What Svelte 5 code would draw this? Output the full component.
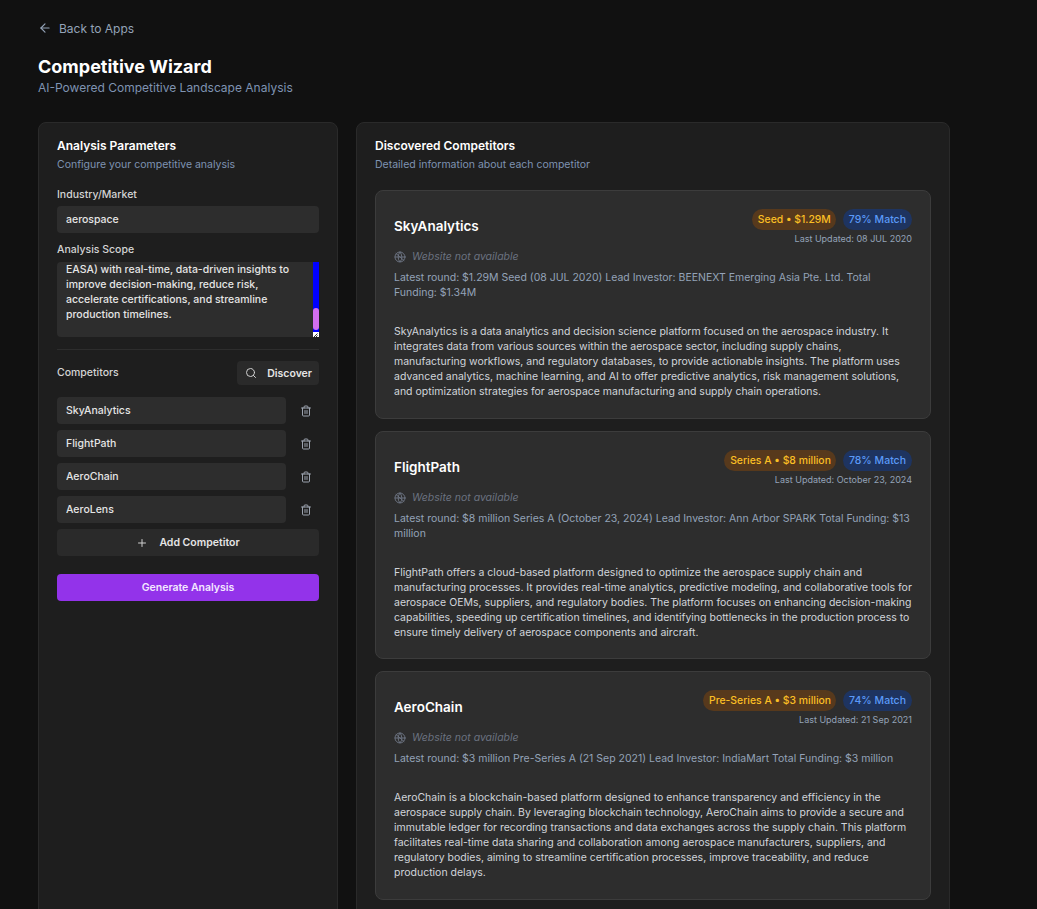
<script>
import { onMount } from 'svelte';
let ta = $state();
const scope = "Map the competitive landscape for platforms serving aerospace manufacturers, suppliers and regulators worldwide (FAA,\nEASA) with real-time, data-driven insights to improve decision-making, reduce risk, accelerate certifications, and streamline production timelines.";
onMount(() => { if (ta) ta.scrollTop = ta.scrollHeight; });
const names = ['SkyAnalytics','FlightPath','AeroChain','AeroLens'];
const cards = [
 {name:'SkyAnalytics',round:'Seed • $1.29M',match:'79% Match',updated:'Last Updated: 08 JUL 2020',
  latest:'Latest round: $1.29M Seed (08 JUL 2020) Lead Investor: BEENEXT Emerging Asia Pte. Ltd. Total Funding: $1.34M',
  desc:'SkyAnalytics is a data analytics and decision science platform focused on the aerospace industry. It integrates data from various sources within the aerospace sector, including supply chains, manufacturing workflows, and regulatory databases, to provide actionable insights. The platform uses advanced analytics, machine learning, and AI to offer predictive analytics, risk management solutions, and optimization strategies for aerospace manufacturing and supply chain operations.'},
 {name:'FlightPath',round:'Series A • $8 million',match:'78% Match',updated:'Last Updated: October 23, 2024',
  latest:'Latest round: $8 million Series A (October 23, 2024) Lead Investor: Ann Arbor SPARK Total Funding: $13 million',
  desc:'FlightPath offers a cloud-based platform designed to optimize the aerospace supply chain and manufacturing processes. It provides real-time analytics, predictive modeling, and collaborative tools for aerospace OEMs, suppliers, and regulatory bodies. The platform focuses on enhancing decision-making capabilities, speeding up certification timelines, and identifying bottlenecks in the production process to ensure timely delivery of aerospace components and aircraft.'},
 {name:'AeroChain',round:'Pre-Series A • $3 million',match:'74% Match',updated:'Last Updated: 21 Sep 2021',
  latest:'Latest round: $3 million Pre-Series A (21 Sep 2021) Lead Investor: IndiaMart Total Funding: $3 million',
  desc:'AeroChain is a blockchain-based platform designed to enhance transparency and efficiency in the aerospace supply chain. By leveraging blockchain technology, AeroChain aims to provide a secure and immutable ledger for recording transactions and data exchanges across the supply chain. This platform facilitates real-time data sharing and collaboration among aerospace manufacturers, suppliers, and regulatory bodies, aiming to streamline certification processes, improve traceability, and reduce production delays.'}
];
</script>

<div class="page">
  <a class="back" href="#top">
    <svg width="14" height="14" viewBox="0 0 24 24" fill="none" stroke="currentColor" stroke-width="2" stroke-linecap="round" stroke-linejoin="round"><path d="M19 12H5"/><path d="m12 19-7-7 7-7"/></svg>
    <span>Back to Apps</span>
  </a>
  <h1>Competitive Wizard</h1>
  <p class="sub">AI-Powered Competitive Landscape Analysis</p>

  <div class="grid">
    <section class="panel left">
      <h2>Analysis Parameters</h2>
      <p class="hint">Configure your competitive analysis</p>
      <div class="label first">Industry/Market</div>
      <input class="field" value="aerospace" />
      <div class="label second">Analysis Scope</div>
      <div class="scope-wrap">
        <textarea class="scope" bind:this={ta} value={scope}></textarea>
        <div class="track"><div class="thumb"></div></div>
        <div class="resizer">
          <svg width="5" height="5" viewBox="0 0 5 5" fill="none" stroke="#333" stroke-width="1"><path d="M0.5 4.5 4.5 0.5"/><path d="M2.5 4.5 4.5 2.5"/></svg>
        </div>
      </div>
      <hr />
      <div class="comp-head">
        <span class="comp-title">Competitors</span>
        <button class="discover">
          <svg width="12" height="12" viewBox="0 0 24 24" fill="none" stroke="currentColor" stroke-width="2" stroke-linecap="round" stroke-linejoin="round"><circle cx="11" cy="11" r="8"/><path d="m21 21-4.3-4.3"/></svg>
          <span>Discover</span>
        </button>
      </div>
      <div class="rows">
        {#each names as n}
          <div class="row">
            <input class="field name" value={n} />
            <span class="trash">
              <svg width="12" height="12" viewBox="0 0 24 24" fill="none" stroke="currentColor" stroke-width="2" stroke-linecap="round" stroke-linejoin="round"><path d="M3 6h18"/><path d="M19 6v14a2 2 0 0 1-2 2H7a2 2 0 0 1-2-2V6"/><path d="M8 6V4a2 2 0 0 1 2-2h4a2 2 0 0 1 2 2v2"/><path d="M10 11v6"/><path d="M14 11v6"/></svg>
            </span>
          </div>
        {/each}
        <button class="add">
          <svg width="12" height="12" viewBox="0 0 24 24" fill="none" stroke="currentColor" stroke-width="2" stroke-linecap="round"><path d="M5 12h14"/><path d="M12 5v14"/></svg>
          <span>Add Competitor</span>
        </button>
      </div>
      <button class="generate">Generate Analysis</button>
    </section>

    <section class="panel right">
      <h2>Discovered Competitors</h2>
      <p class="hint">Detailed information about each competitor</p>
      <div class="cards">
        {#each cards as c}
          <article class="card">
            <div class="top">
              <h3>{c.name}</h3>
              <div class="meta">
                <div class="badges">
                  <span class="badge amber">{c.round}</span>
                  <span class="badge blue">{c.match}</span>
                </div>
                <div class="updated">{c.updated}</div>
              </div>
            </div>
            <div class="site">
              <svg width="12" height="12" viewBox="0 0 24 24" fill="none" stroke="currentColor" stroke-width="2" stroke-linecap="round" stroke-linejoin="round"><circle cx="12" cy="12" r="10"/><path d="M2 12h20"/><path d="M12 2a15 15 0 0 1 0 20 15 15 0 0 1 0-20"/><path d="m4 5 16 14"/></svg>
              <em>Website not available</em>
            </div>
            <p class="latest">{c.latest}</p>
            <p class="desc">{c.desc}</p>
          </article>
        {/each}
      </div>
    </section>
  </div>
</div>

<style>
:global(html), :global(body) { margin: 0; background: #111111; }
:global(body) { overflow: hidden; }
.page { height: 909px; overflow: hidden; box-sizing: border-box; padding: 20px 87px 0 38px; font-family: Inter, "Liberation Sans", sans-serif; color: #fff; background: #111111; }
.back { display: flex; align-items: center; gap: 7px; height: 16px; color: #94a3b8; font-size: 12px; text-decoration: none; }
h1 { margin: 20px 0 0; font-size: 18px; line-height: 22px; font-weight: 700; color: #fff; }
.sub { margin: 2px 0 0; font-size: 12px; line-height: 16px; color: #7f93b2; }
.grid { display: grid; grid-template-columns: 300px 594px; gap: 18px; margin-top: 26px; }
.panel { box-sizing: border-box; background: #1e1e1e; border: 1px solid #2a2a2a; border-radius: 8px; padding: 15px 18px 18px; }
h2 { margin: 0; font-size: 12px; line-height: 15px; font-weight: 600; color: #fff; }
.hint { margin: 5px 0 0; font-size: 10.5px; line-height: 14px; color: #7f93b2; }
.label { font-size: 10.5px; line-height: 14px; font-weight: 500; color: #d4d4d4; }
.label.first { margin-top: 16px; }
.label.second { margin-top: 10px; }
.field { display: block; box-sizing: border-box; width: 100%; height: 27px; margin: 0; border: 0; outline: 0; border-radius: 4px; background: #2d2d2d; color: #e5e5e5; padding: 0 9px; font: 500 10.5px Inter, sans-serif; }
.label.first + .field { margin-top: 4px; }
.scope-wrap { position: relative; margin-top: 5px; height: 75px; }
.scope { display: block; box-sizing: border-box; width: 100%; height: 75px; margin: 0; border: 0; outline: 0; border-radius: 4px; background: #2d2d2d; color: #e5e5e5; padding: 8px 15px 15px 9px; font: 500 10.5px/15px Inter, sans-serif; resize: none; overflow: hidden; }
.track { position: absolute; top: 0; right: 0; bottom: 5px; width: 6px; background: #0000ff; }
.thumb { position: absolute; left: 0; right: 0; top: 46px; height: 22px; background: #d36ef0; border-radius: 3px; }
.resizer { position: absolute; right: 0; bottom: 0; width: 6px; height: 5px; background: #fff; line-height: 0; }
hr { border: 0; border-top: 1px solid #2d2d2d; margin: 12px 0 0; }
.comp-head { display: flex; justify-content: space-between; align-items: center; margin-top: 11px; }
.comp-title { font-size: 10.5px; font-weight: 500; color: #d4d4d4; padding-bottom: 2px; }
button { border: 0; font-family: inherit; cursor: pointer; }
.discover { display: flex; align-items: center; gap: 10px; height: 24px; padding: 0 7px 0 8px; border-radius: 4px; background: #2a2a2a; color: #e5e5e5; font-size: 10.5px; font-weight: 600; }
.discover svg { color: #cfcfcf; }
.rows { display: flex; flex-direction: column; gap: 6px; margin-top: 12px; }
.row { display: flex; align-items: center; gap: 0; }
.name { width: 229px; flex: none; }
.trash { flex: 1; display: flex; justify-content: center; color: #9ca3af; padding-left: 6px; }
.add { display: flex; justify-content: center; align-items: center; gap: 11px; height: 27px; border-radius: 4px; background: #2a2a2a; color: #e5e5e5; font-size: 10.5px; font-weight: 600; }
.add svg { color: #cfcfcf; }
.generate { display: block; width: 100%; height: 27px; margin-top: 18px; border-radius: 4px; background: #9333ea; color: #f3e8ff; font-size: 10.5px; font-weight: 600; }
.cards { display: flex; flex-direction: column; gap: 12px; margin-top: 18px; }
.card { box-sizing: border-box; background: #2d2d2d; border: 1px solid #3c3c3c; border-radius: 8px; padding: 18px 18px 18.5px; }
.top { display: flex; justify-content: space-between; align-items: center; }
h3 { margin: 0; padding-bottom: 2px; font-size: 13.5px; line-height: 18px; font-weight: 600; color: #fff; }
.meta { display: flex; flex-direction: column; align-items: flex-end; }
.badges { display: flex; gap: 7px; }
.badge { font-size: 10.5px; line-height: 15px; padding: 3px 6px; border-radius: 999px; font-weight: 500; }
.amber { background: #57391c; color: #fbbf24; font-size: 10.4px; padding-right: 5px; }
.blue { background: #1e3460; color: #5b9af8; }
.updated { margin-top: 3px; font-size: 9px; line-height: 12px; color: #94a3b8; }
.site { display: flex; align-items: center; gap: 6px; margin-top: 5px; color: #6b7280; font-size: 10.5px; line-height: 14px; }
.latest { margin: 6px 0 0; font-size: 10.5px; line-height: 15px; color: #94a3b8; }
.desc { margin: 24px 0 0; font-size: 10.5px; line-height: 15px; color: #d1d5db; }
</style>
